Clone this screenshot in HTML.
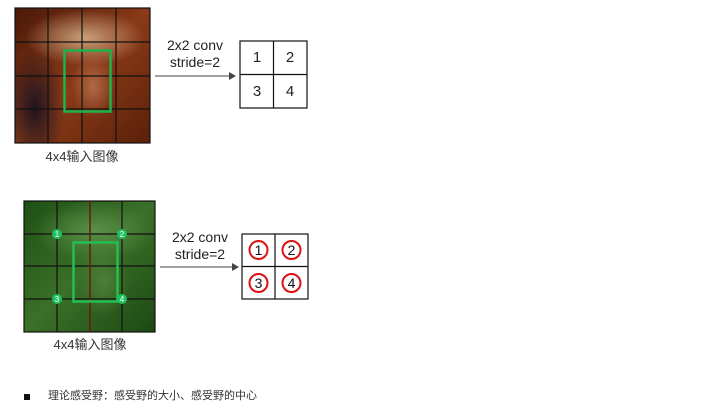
<!DOCTYPE html>
<html><head><meta charset="utf-8"><style>
body{margin:0;width:717px;height:412px;background:#fff;position:relative;overflow:hidden;font-family:"Liberation Sans","Noto Sans CJK SC",sans-serif;color:#222}
.a{position:absolute}
.t{position:absolute;font-size:14px;line-height:17px;text-align:center}
</style></head><body>
<div class="a" style="left:15px;top:8px;width:135px;height:135px;background:
radial-gradient(ellipse 22px 32px at 78px 78px,#b06a45,transparent),
radial-gradient(ellipse 60px 28px at 70px 30px,#c9a07a,transparent),
radial-gradient(ellipse 30px 60px at 20px 100px,#1e1420,transparent),
linear-gradient(135deg,#4a1808,#8a3a18 50%,#5a2008);"></div>
<svg class="a" style="left:0;top:0" width="717" height="412">
<g stroke="#111" stroke-width="1.2" fill="none">
<rect x="15" y="8" width="135" height="135"/>
<path d="M48 8V143M82 8V143M116 8V143M15 42H150M15 76H150M15 109H150"/>
</g>
<rect x="64.5" y="50.5" width="46" height="61" fill="none" stroke="#1db34a" stroke-width="2.5"/>
<path d="M155 76H230" stroke="#444" stroke-width="1"/><path d="M229 72L236 76L229 80Z" fill="#444"/>
<g stroke="#111" stroke-width="1.2" fill="none">
<rect x="240" y="41" width="67" height="67"/><path d="M273.5 41V108M240 74.5H307"/>
</g>
</svg>
<div class="t" style="left:150px;top:37px;width:90px">2x2 conv<br>stride=2</div>
<div class="t" style="left:240px;top:49px;width:34px;font-size:15px">1</div>
<div class="t" style="left:273px;top:49px;width:34px;font-size:15px">2</div>
<div class="t" style="left:240px;top:83px;width:34px;font-size:15px">3</div>
<div class="t" style="left:273px;top:83px;width:34px;font-size:15px">4</div>
<div class="t" style="left:32px;top:148px;width:100px;font-size:13px;color:#333">4x4输入图像</div>

<div class="a" style="left:24px;top:201px;width:131px;height:131px;background:
radial-gradient(ellipse 60px 30px at 70px 30px,#5a9048,transparent),
radial-gradient(ellipse 25px 35px at 80px 80px,#4e7e38,transparent),
linear-gradient(135deg,#1e5014,#3a7028 50%,#1c4812);"></div>
<svg class="a" style="left:0;top:0" width="717" height="412">
<g stroke="#111" stroke-width="1.2" fill="none">
<rect x="24" y="201" width="131" height="131"/>
<path d="M57 201V332M122 201V332M24 234H155M24 266H155M24 299H155"/>
</g>
<path d="M90 201V332" stroke="#6a1a10" stroke-width="1.5"/>
<rect x="73.5" y="242.5" width="44" height="59" fill="none" stroke="#22c050" stroke-width="2.5"/>
<g fill="#1fc060"><circle cx="57" cy="234" r="5"/><circle cx="122" cy="234" r="5"/><circle cx="57" cy="299" r="5"/><circle cx="122" cy="299" r="5"/></g>
<g font-size="8" fill="#fff" text-anchor="middle" font-family="Liberation Sans"><text x="57" y="237">1</text><text x="122" y="237">2</text><text x="57" y="302">3</text><text x="122" y="302">4</text></g>
<path d="M160 267H233" stroke="#444" stroke-width="1"/><path d="M232 263L239 267L232 271Z" fill="#444"/>
<g stroke="#111" stroke-width="1.2" fill="none">
<rect x="242" y="234" width="66" height="65"/><path d="M275 234V299M242 266.5H308"/>
</g>
<g stroke="#e01010" stroke-width="2" fill="none"><circle cx="258.5" cy="250" r="9"/><circle cx="291.5" cy="250" r="9"/><circle cx="258.5" cy="283" r="9"/><circle cx="291.5" cy="283" r="9"/></g>
<g font-size="14" fill="#111" text-anchor="middle" font-family="Liberation Sans"><text x="258.5" y="255">1</text><text x="291.5" y="255">2</text><text x="258.5" y="288">3</text><text x="291.5" y="288">4</text></g>
</svg>
<div class="t" style="left:155px;top:229px;width:90px">2x2 conv<br>stride=2</div>
<div class="t" style="left:40px;top:336px;width:100px;font-size:13px;color:#333">4x4输入图像</div>

<div class="a" style="left:24px;top:394px;width:6px;height:6px;background:#111"></div>
<div class="a" style="left:48px;top:389px;font-size:11px;line-height:15px;color:#333">理论感受野：感受野的大小、感受野的中心</div>
</body></html>
